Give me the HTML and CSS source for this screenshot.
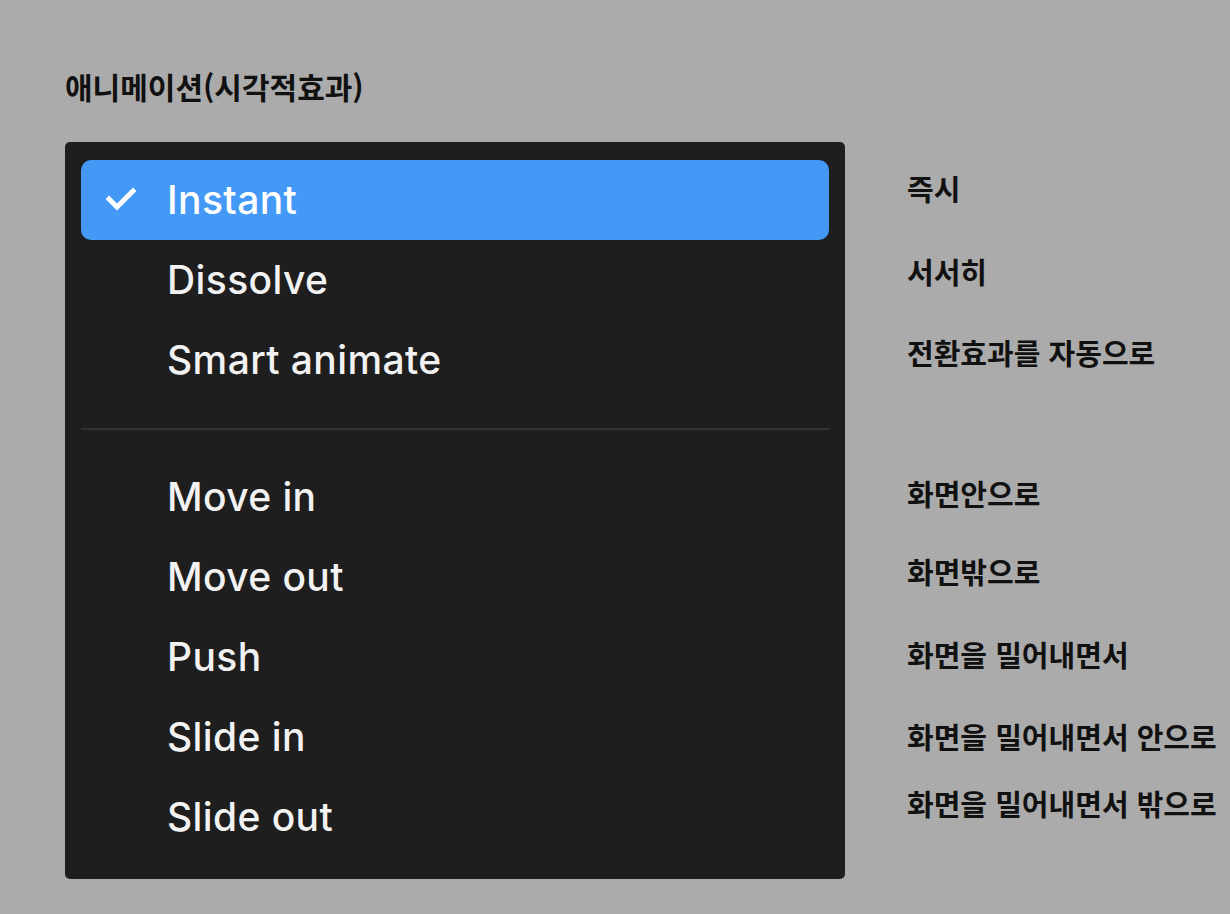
FILE: index.html
```html
<!DOCTYPE html>
<html lang="ko">
<head>
<meta charset="utf-8">
<link rel="stylesheet" href="styles.css">
</head>
<body>
<div class="page">
  <h1 class="title">애니메이션(시각적효과)</h1>
  <div class="content">
    <div class="menu">
      <div class="item selected">
        <svg class="check" viewBox="0 0 30 24" width="30" height="24"><polyline points="3,12 11,20 27,4" fill="none" stroke="#fff" stroke-width="5" stroke-linecap="square" stroke-linejoin="miter"/></svg>
        <span>Instant</span>
      </div>
      <div class="item"><span>Dissolve</span></div>
      <div class="item"><span>Smart animate</span></div>
      <div class="sep"><div class="line"></div></div>
      <div class="item"><span>Move in</span></div>
      <div class="item"><span>Move out</span></div>
      <div class="item"><span>Push</span></div>
      <div class="item"><span>Slide in</span></div>
      <div class="item"><span>Slide out</span></div>
    </div>
    <div class="labels">
      <div class="label l1">즉시</div>
      <div class="label l2">서서히</div>
      <div class="label l3">전환효과를 자동으로</div>
      <div class="label l4">화면안으로</div>
      <div class="label l5">화면밖으로</div>
      <div class="label l6">화면을 밀어내면서</div>
      <div class="label l7">화면을 밀어내면서 안으로</div>
      <div class="label l8">화면을 밀어내면서 밖으로</div>
    </div>
  </div>
</div>
</body>
</html>
```
FILE: styles.css
```css
html, body {
  margin: 0;
  padding: 0;
  background: #ababab;
}
.page {
  padding: 66px 0 0 65px;
}
.title {
  margin: 0 0 36px 0;
  font-family: "Noto Sans CJK KR", "Noto Sans", sans-serif;
  font-weight: 700;
  font-size: 30px;
  line-height: 40px;
  color: #111;
}
.content {
  display: flex;
  align-items: flex-start;
}
.menu {
  width: 780px;
  box-sizing: border-box;
  background: #1e1e1e;
  border-radius: 5px;
  padding: 18px 16px 22px 16px;
  font-family: Inter, "Liberation Sans", sans-serif;
  font-size: 39px;
  font-weight: 500;
  letter-spacing: 0.4px;
  color: #f2f2f2;
}
.item {
  height: 80px;
  display: flex;
  align-items: center;
  padding-left: 86px;
  border-radius: 10px;
  position: relative;
}
.item span {
  position: relative;
  top: -1px;
}
.item.selected {
  background: #4499f7;
  color: #fff;
}
.check {
  position: absolute;
  left: 25px;
  top: 27px;
}
.sep {
  height: 57px;
  display: flex;
  align-items: center;
}
.line {
  height: 2px;
  width: 100%;
  background: #333333;
}
.labels {
  margin-left: 62px;
  display: flex;
  flex-direction: column;
  font-family: "Noto Sans CJK KR", "Noto Sans", sans-serif;
  font-weight: 700;
  font-size: 29px;
  line-height: 36px;
  color: #111;
}
.label { white-space: nowrap; }
.l1 { margin-top: 28px; }
.l2 { margin-top: 47px; }
.l3 { margin-top: 45px; }
.l4 { margin-top: 105px; }
.l5 { margin-top: 42px; }
.l6 { margin-top: 47px; }
.l7 { margin-top: 46px; }
.l8 { margin-top: 31px; }
```
